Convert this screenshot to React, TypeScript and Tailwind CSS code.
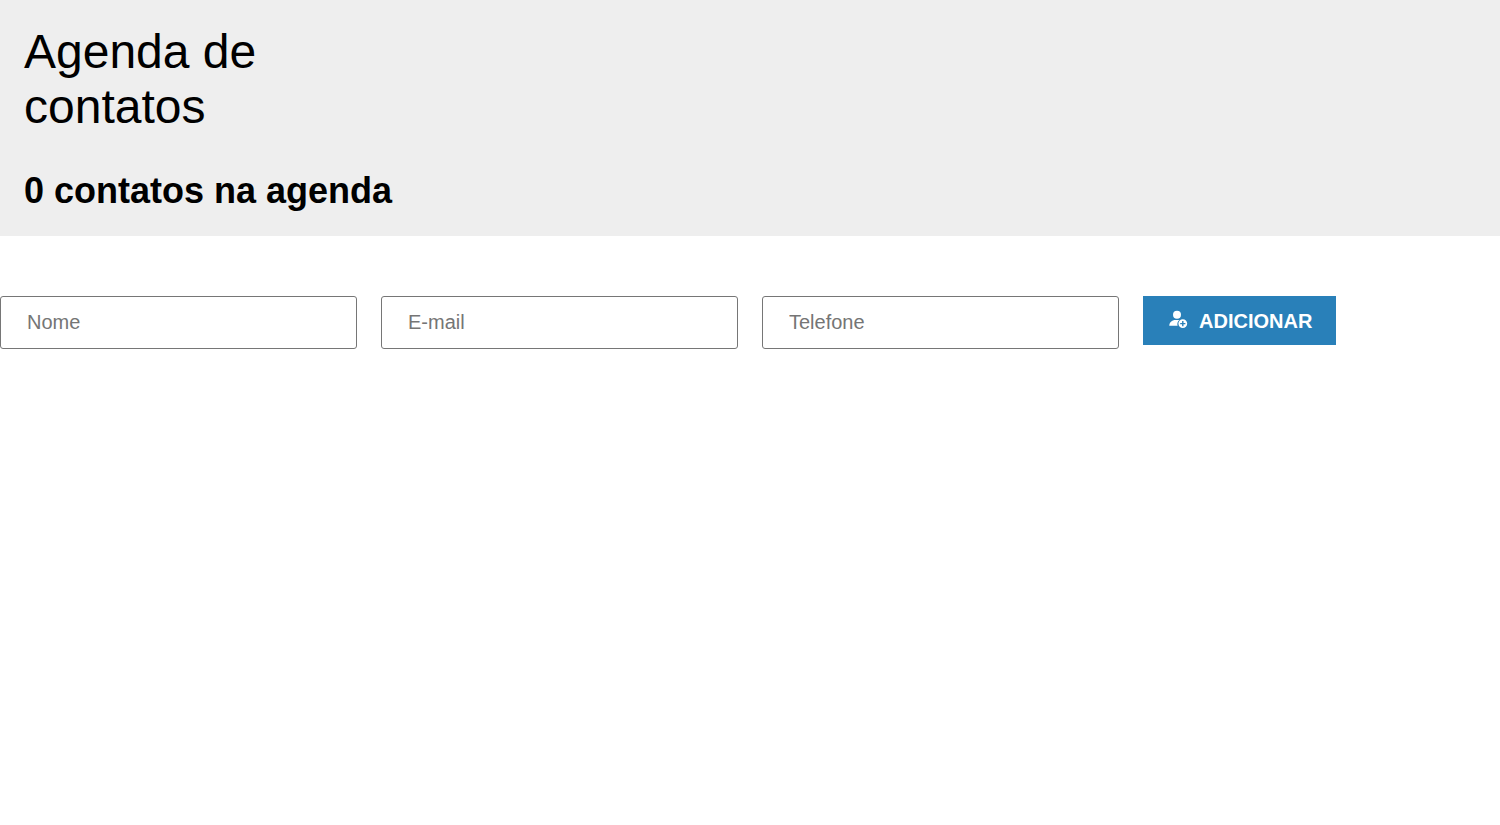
import { useState, type FormEvent } from 'react';

const fields = [
  { id: 'nome', type: 'text', label: 'Nome' },
  { id: 'email', type: 'email', label: 'E-mail' },
  { id: 'telefone', type: 'tel', label: 'Telefone' },
];

function UserAddIcon() {
  return (
    <svg className="h-6 w-6" viewBox="0 0 24 24" fill="currentColor" aria-hidden="true">
      <circle cx="10" cy="5.7" r="4" />
      <path d="M10.6 16.8H2.300c0-3.500 2.600-5.900 6.200-5.900h3.800a5.700 5.700 0 0 0-1.700 5.900z" />
      <path
        fillRule="evenodd"
        d="M15.800 10.200a4.400 4.400 0 1 1 0 8.800a4.400 4.400 0 0 1 0-8.800zM15.100 12v1.900h-1.900v1.400h1.900v1.900h1.400v-1.900h1.900v-1.400h-1.900v-1.900z"
      />
    </svg>
  );
}

export default function App() {
  const [count, setCount] = useState(0);

  function handleSubmit(event: FormEvent<HTMLFormElement>) {
    event.preventDefault();
    setCount(count + 1);
    event.currentTarget.reset();
  }

  return (
    <div className="font-['Liberation_Sans',Arial,sans-serif] text-black">
      <header className="bg-[#eeeeee] p-6">
        <h1 className="max-w-xs text-5xl leading-[55px]">Agenda de contatos</h1>
        <h2 className="mt-9 text-4xl leading-[42px] font-bold">{count} contatos na agenda</h2>
      </header>
      <main className="pt-15">
        <form className="flex items-start gap-6" onSubmit={handleSubmit}>
          {fields.map((field) => (
            <input
              key={field.id}
              id={field.id}
              type={field.type}
              aria-label={field.label}
              placeholder={field.label}
              className="w-[357px] rounded-[3px] border border-[#767676] bg-white px-[26px] py-3 text-xl leading-[27px] placeholder:text-[#757575]"
            />
          ))}
          <button
            type="submit"
            className="flex shrink-0 items-center gap-2 bg-[#2980b9] px-6 pt-[13px] pb-3 text-xl leading-6 font-bold text-white"
          >
            <UserAddIcon />
            ADICIONAR
          </button>
        </form>
      </main>
    </div>
  );
}
